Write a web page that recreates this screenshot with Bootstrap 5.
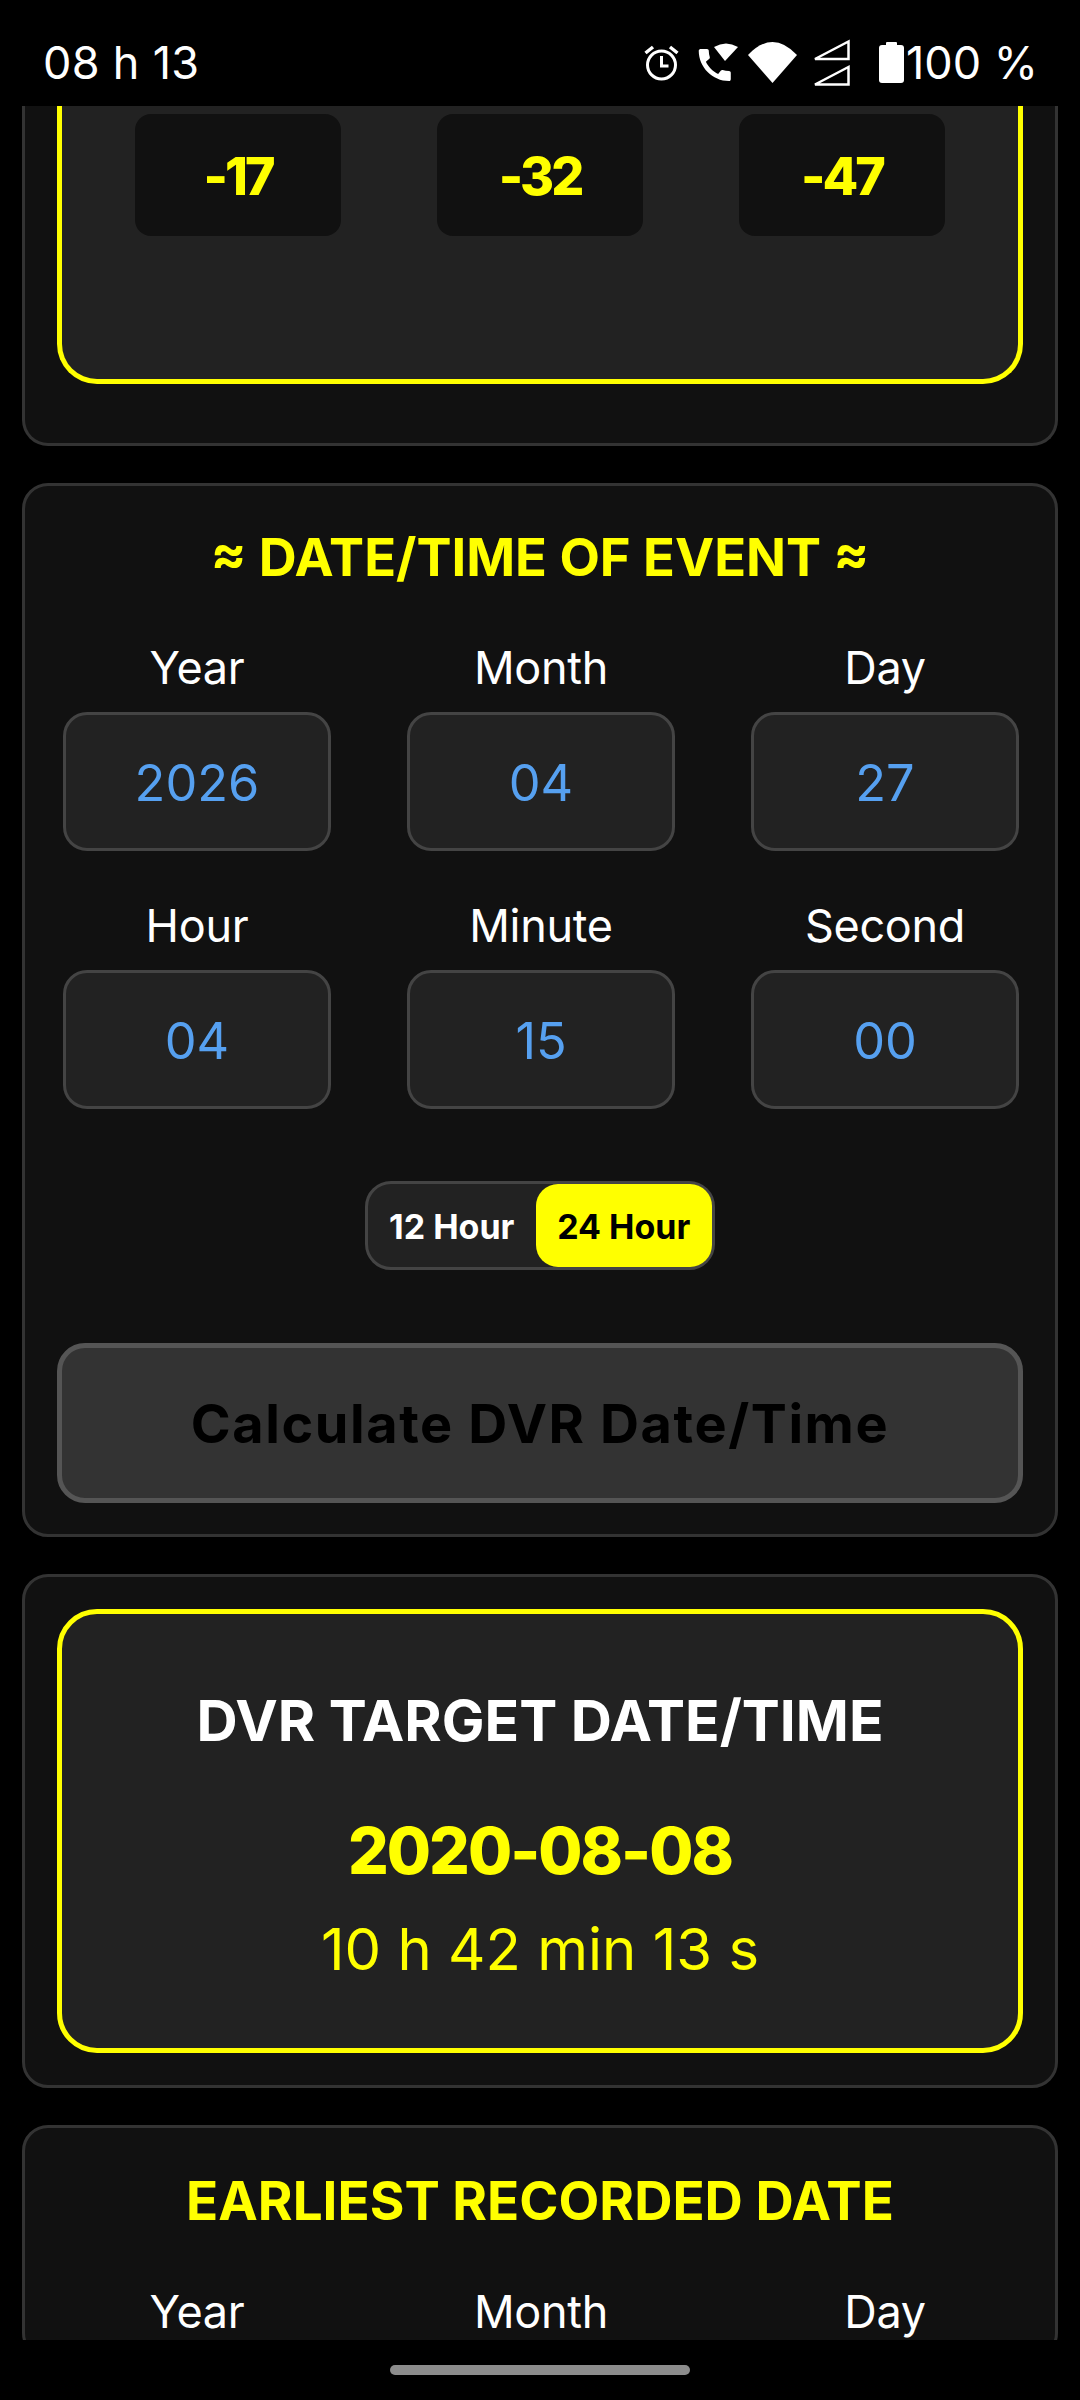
<!doctype html>
<html lang="en">
<head>
<meta charset="utf-8">
<title>DVR Date/Time</title>
<link href="https://cdn.jsdelivr.net/npm/bootstrap@5.3.0/dist/css/bootstrap.min.css" rel="stylesheet">
<style>
html,body{background:#000;}
body{width:1080px;height:2400px;overflow:hidden;font-family:Inter,"Noto Sans",sans-serif;color:#fff;}
.status-bar{height:106px;padding:18px 42px 0 43px;font-size:45px;line-height:1;}
.status-time{letter-spacing:.3px;}
.status-icons{height:47px;}
.status-pct{margin-left:2px;}
.main-clip{height:2234px;overflow:hidden;}
.panel{--bs-card-bg:#111;--bs-card-border-color:#333;--bs-card-border-width:3px;--bs-card-border-radius:26px;--bs-card-inner-border-radius:23px;margin:0 22px 37px;color:#fff;}
.panel-clipped{border-top:0;border-top-left-radius:0;border-top-right-radius:0;padding-bottom:59px;}
.outline-box{margin:0 32px;background:#222;border:5px solid #ff0;border-radius:40px;}
.outline-clipped{height:278px;border-top:0;border-top-left-radius:0;border-top-right-radius:0;padding-top:8px;gap:96px;}
.offset-chip{width:206px;height:122px;padding-top:3px;background:#111;border-radius:16px;color:#ff0;font-size:52px;font-weight:800;letter-spacing:-3px;}
.sec-title{color:#ff0;font-size:52.5px;line-height:48px;font-weight:700;margin:47px 0 0;}
.field-grid{display:grid;grid-template-columns:repeat(3,268px);column-gap:76px;row-gap:49px;margin:61px 38px 0;}
.field-label{font-size:45px;line-height:52px;margin-bottom:18px;letter-spacing:-.3px;}
.field-box{height:139px;padding-top:2px;background:#222;border:3px solid #444;border-radius:24px;color:#56a0f0;font-size:50.5px;}
.hour-toggle{width:350px;height:89px;margin:72px auto 73px;background:#222;border:3px solid #444;border-radius:26px;font-size:34px;font-weight:700;}
.hour-off{width:168px;padding-top:2px;}
.hour-on{width:177px;padding-top:2px;background:#ff0;color:#000;border-radius:22px;}
.calc-btn{--bs-btn-disabled-bg:#333;--bs-btn-disabled-border-color:#555;--bs-btn-disabled-color:#000;--bs-btn-disabled-opacity:1;display:block;width:966px;height:160px;margin:0 32px 31px;background:#333;border:5px solid #555;border-radius:28px;color:#000;font-size:54px;font-weight:700;letter-spacing:1.6px;}
.result-wrap{padding:32px 0;}
.result-box{height:444px;padding-top:77px;}
.result-head{font-size:57px;line-height:60px;font-weight:700;margin:0;}
.result-date{color:#ff0;font-size:64px;line-height:80px;font-weight:800;margin-top:60px;letter-spacing:-2px;}
.result-time{color:#ff0;font-size:58px;line-height:70px;margin-top:23px;}
.sec-title.earliest-title{margin-top:49px;font-size:53px;}
.earliest-grid{margin-top:61px;}
.home-zone{height:60px;}
.home-pill{width:300px;height:10px;margin-top:25px;background:#8c8c8c;border-radius:5px;}
</style>
</head>
<body>
<header class="status-bar d-flex justify-content-between align-items-center">
  <span class="status-time">08 h 13</span>
  <div class="status-icons d-flex align-items-center">
    <svg width="35" height="37" viewBox="0 0 35 37" fill="none" stroke="#fff" stroke-width="3"><circle cx="17.5" cy="21" r="14"/><path d="M17.500 12v10h7"/><path d="M1.500 9 9 3M33.500 9 26 3" stroke-width="3.500"/></svg>
    <svg width="40" height="39" viewBox="0 0 40 39" fill="#fff" style="margin-left:19px"><path transform="translate(-4.6 .6) scale(1.78)" d="M20.01 15.38c-1.23 0-2.42-.2-3.53-.56-.35-.12-.74-.03-1.01.24l-1.57 1.97c-2.83-1.35-5.48-3.9-6.89-6.83l1.95-1.66c.27-.28.35-.67.24-1.02-.37-1.11-.56-2.3-.56-3.53 0-.54-.45-.99-.99-.99H4.19C3.65 3 3 3.24 3 3.99 3 13.28 10.73 21 20.01 21c.71 0 .99-.63.99-1.18v-3.45c0-.54-.45-.99-.99-.99z"/><path d="M16 4Q28-3 40 4L27 18Z"/></svg>
    <svg width="49" height="41" viewBox="0 0 49 41" fill="#fff" style="margin-left:10px"><path d="M0 13Q24.5-13 49 13L24.5 41Z"/></svg>
    <svg width="38" height="47" viewBox="0 0 38 47" fill="none" stroke="#fff" stroke-width="2.5" style="margin-left:15px"><path d="M3 20 36.500 2.500V20Z"/><path d="M3 45.500 36.500 28V45.500Z"/></svg>
    <svg width="25" height="41" viewBox="0 0 25 41" fill="#fff" style="margin-left:29px"><rect y="3" width="25" height="38" rx="3"/><rect x="7" width="11" height="5" rx="1"/></svg>
    <span class="status-pct">100 %</span>
  </div>
</header>

<main class="main-clip">
  <section class="card panel panel-clipped">
    <div class="outline-box outline-clipped d-flex justify-content-center align-items-start">
      <div class="offset-chip d-flex align-items-center justify-content-center">-17</div>
      <div class="offset-chip d-flex align-items-center justify-content-center">-32</div>
      <div class="offset-chip d-flex align-items-center justify-content-center">-47</div>
    </div>
  </section>

  <section class="card panel">
    <h2 class="sec-title text-center">≈ DATE/TIME OF EVENT ≈</h2>
    <div class="field-grid text-center">
      <div><div class="field-label">Year</div><div class="field-box d-flex align-items-center justify-content-center">2026</div></div>
      <div><div class="field-label">Month</div><div class="field-box d-flex align-items-center justify-content-center">04</div></div>
      <div><div class="field-label">Day</div><div class="field-box d-flex align-items-center justify-content-center">27</div></div>
      <div><div class="field-label">Hour</div><div class="field-box d-flex align-items-center justify-content-center">04</div></div>
      <div><div class="field-label">Minute</div><div class="field-box d-flex align-items-center justify-content-center">15</div></div>
      <div><div class="field-label">Second</div><div class="field-box d-flex align-items-center justify-content-center">00</div></div>
    </div>
    <div class="hour-toggle d-flex">
      <div class="hour-off d-flex align-items-center justify-content-center">12 Hour</div>
      <div class="hour-on d-flex align-items-center justify-content-center">24 Hour</div>
    </div>
    <button class="btn calc-btn p-0" disabled>Calculate DVR Date/Time</button>
  </section>

  <section class="card panel result-wrap">
    <div class="outline-box result-box text-center">
      <h2 class="result-head">DVR TARGET DATE/TIME</h2>
      <div class="result-date">2020-08-08</div>
      <div class="result-time">10 h 42 min 13 s</div>
    </div>
  </section>

  <section class="card panel">
    <h2 class="sec-title earliest-title text-center">EARLIEST RECORDED DATE</h2>
    <div class="field-grid earliest-grid text-center">
      <div class="field-label">Year</div>
      <div class="field-label">Month</div>
      <div class="field-label">Day</div>
    </div>
  </section>
</main>

<footer class="home-zone d-flex justify-content-center"><div class="home-pill"></div></footer>
<script src="https://cdn.jsdelivr.net/npm/bootstrap@5.3.0/dist/js/bootstrap.bundle.min.js"></script>
</body>
</html>
